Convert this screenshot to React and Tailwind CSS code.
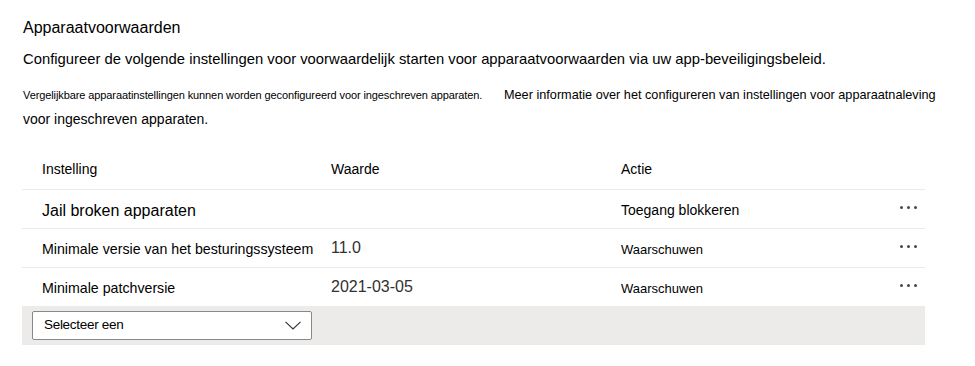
import React from "react";

const rows = [
  { name: "Jail broken apparaten", nameCls: "text-[16px]", value: "", action: "Toegang blokkeren", actionCls: "text-[14px]" },
  { name: "Minimale versie van het besturingssysteem", nameCls: "text-[14.2px]", value: "11.0", action: "Waarschuwen", actionCls: "text-[13px]" },
  { name: "Minimale patchversie", nameCls: "text-[14.2px]", value: "2021-03-05", action: "Waarschuwen", actionCls: "text-[13px]" },
];

function Dots() {
  return (
    <div className="flex items-center gap-[4px]">
      <span className="block w-[3px] h-[3px] rounded-full bg-[#4a4846]" />
      <span className="block w-[3px] h-[3px] rounded-full bg-[#4a4846]" />
      <span className="block w-[3px] h-[3px] rounded-full bg-[#4a4846]" />
    </div>
  );
}

export default function App() {
  return (
    <div className="w-[975px] h-[366px] bg-white text-black font-['Liberation_Sans',Arial,sans-serif] overflow-hidden">
      <div className="pl-[23px] pt-[18px]">
        <div className="text-[16px] leading-[20px]">Apparaatvoorwaarden</div>
        <div className="mt-[11px] text-[14.8px] leading-[20px]">
          Configureer de volgende instellingen voor voorwaardelijk starten voor apparaatvoorwaarden via uw app-beveiligingsbeleid.
        </div>
        <div className="mt-[18px] flex items-baseline">
          <span className="w-[481px] text-[11px] tracking-[-0.1px] leading-[16px]">
            Vergelijkbare apparaatinstellingen kunnen worden geconfigureerd voor ingeschreven apparaten.
          </span>
          <span className="text-[12.7px] leading-[16px]">
            Meer informatie over het configureren van instellingen voor apparaatnaleving
          </span>
        </div>
        <div className="mt-[6px] text-[14px] leading-[20px]">voor ingeschreven apparaten.</div>
      </div>

      <div className="ml-[22px] w-[903px] mt-[21px]">
        <div className="flex h-[40px] items-center border-b border-[#edebe9] text-[14px]">
          <div className="w-[309px] pl-[20px]">Instelling</div>
          <div className="w-[290px]">Waarde</div>
          <div className="flex-1">Actie</div>
        </div>
        {rows.map((r, i) => (
          <div
            key={i}
            className={`flex items-center pt-[3px] ${i === 2 ? "h-[38px]" : "h-[39px] border-b border-[#edebe9]"}`}
          >
            <div className={`w-[309px] pl-[20px] ${r.nameCls}`}>{r.name}</div>
            <div className="w-[290px] text-[16px] text-[#323130] -mt-[3px]">{r.value}</div>
            <div className={`flex-1 ${r.actionCls}`}>{r.action}</div>
            <div className="pr-[8px] -mt-[6px]">
              <Dots />
            </div>
          </div>
        ))}
        <div className="h-[39px] bg-[#edebe9] pl-[10px] pt-[5px]">
          <div className="w-[280px] h-[29px] bg-white border border-[#8a8886] rounded-[2px] flex items-center justify-between pl-[11px] pr-[10px]">
            <span className="text-[13.5px] tracking-[-0.3px] text-black">Selecteer een</span>
            <svg width="16" height="9" viewBox="0 0 16 9" fill="none">
              <path d="M0.5 0.8 L8 8 L15.5 0.8" stroke="#323130" strokeWidth="1.1" />
            </svg>
          </div>
        </div>
      </div>
    </div>
  );
}
